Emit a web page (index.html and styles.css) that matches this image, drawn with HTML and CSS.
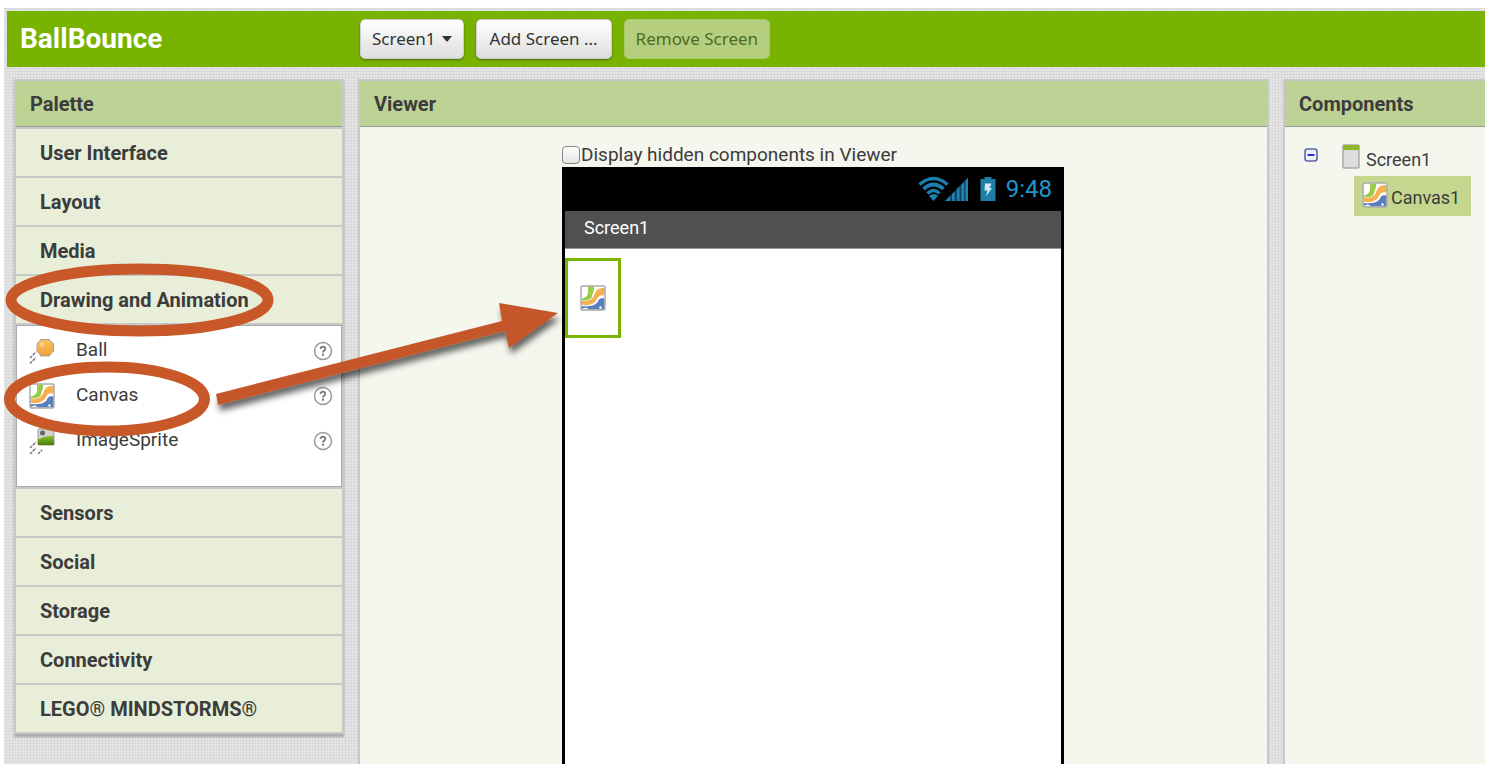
FILE: index.html
```html
<!DOCTYPE html>
<html lang="en">
<head>
<meta charset="utf-8">
<title>BallBounce</title>
<link rel="stylesheet" href="styles.css">
</head>
<body>
<svg class="defs" aria-hidden="true">
  <defs>
    <linearGradient id="orange" x1="0" y1="0" x2="0" y2="1"><stop offset="0" stop-color="#fbc35c"/><stop offset="1" stop-color="#eea139"/></linearGradient>
    <linearGradient id="hill" x1="0" y1="0" x2="0" y2="1"><stop offset="0" stop-color="#8cc42c"/><stop offset="1" stop-color="#4a7d0a"/></linearGradient>
    <symbol id="i-canvas" viewBox="0 0 26 26">
      <rect x="1" y="1" width="24" height="24" rx="1.5" fill="#fff"/>
      <path d="M8 1.500H14C14.500 6 12.500 8 12 11.500C11 15 6.500 15.500 2 15.500V13.500C6 12.500 8.500 10 8 6Z" fill="#9ccb4b"/>
      <path d="M24.500 3C17.500 2.500 15.500 6 14 10.500C12.500 15 7.500 16 1.500 16V19.500C9 21.500 15 18.500 17 14C18.500 10.500 20.500 10 24.500 10.500Z" fill="#f6b04f"/>
      <path d="M24.500 13.500C20 12.500 18.500 14.500 17.500 17.500C14 21.500 8 21.500 1.500 21V24.500H24.500Z" fill="#587fbd"/>
      <circle cx="20.500" cy="22.500" r="1.200" fill="#fff"/><path d="M2.500 23.500L6 22.500L9.500 24.500H2.500Z" fill="#fff"/>
      <rect x="1" y="1" width="24" height="24" rx="1.500" fill="none" stroke="#aaa" stroke-width="1.500"/>
    </symbol>
    <symbol id="i-help" viewBox="0 0 20 20">
      <circle cx="10" cy="10" r="8.500" fill="#fff" stroke="#999" stroke-width="1.500"/>
      <path d="M7.500 8C7.500 4.800 12.500 5 12.300 7.900C12.200 9.500 10 9.500 10 11.500" fill="none" stroke="#777" stroke-width="1.800"/><rect x="9" y="12.700" width="2" height="2" fill="#777"/>
    </symbol>
  </defs>
</svg>
<div class="app">
  <header class="topbar">
    <h1 class="project">BallBounce</h1>
    <div class="actions">
      <button class="btn" type="button">Screen1 <svg class="caret" viewBox="0 0 10 6"><path d="M0 0H10L5.500 5.500H4.500Z" fill="#333"/></svg></button>
      <button class="btn btn-add" type="button">Add Screen ...</button>
      <button class="btn" type="button" disabled>Remove Screen</button>
    </div>
  </header>
  <main class="columns">
    <div class="side">
      <section class="panel palette">
        <h2 class="panel-title">Palette</h2>
        <button class="category" type="button">User Interface</button>
        <button class="category" type="button">Layout</button>
        <button class="category" type="button">Media</button>
        <button class="category" type="button">Drawing and Animation</button>
        <ul class="items">
          <li class="item">
            <svg class="item-icon" viewBox="0 0 26 26"><path d="M1 20L7 14M1 25.500L7 19.500" stroke="#666" stroke-width="1.300" stroke-dasharray="3 1"/><path d="M12 1H20L25 6V13L20 18.500H12L7.500 13V6Z" fill="#999"/><circle cx="16.200" cy="9.800" r="8.300" fill="url(#orange)"/><circle cx="13" cy="6.500" r="2.200" fill="#fff" opacity=".35"/></svg>
            <span class="item-name">Ball</span>
            <button class="help" type="button" aria-label="About Ball"><svg viewBox="0 0 20 20"><use href="#i-help"/></svg></button>
          </li>
          <li class="item">
            <svg class="item-icon" viewBox="0 0 26 26"><use href="#i-canvas"/></svg>
            <span class="item-name">Canvas</span>
            <button class="help" type="button" aria-label="About Canvas"><svg viewBox="0 0 20 20"><use href="#i-help"/></svg></button>
          </li>
          <li class="item">
            <svg class="item-icon" viewBox="0 0 26 26"><path d="M1 20L7 14M1 26L7 20M9 26L13 22" stroke="#666" stroke-width="1.300" stroke-dasharray="3 1"/><rect x="9" y="1" width="16" height="16" rx="1" fill="#d0d4d0" stroke="#999"/><circle cx="13.500" cy="5" r="2.500" fill="#666"/><path d="M9 11C13 11 16 7 25 8V17H9Z" fill="url(#hill)"/></svg>
            <span class="item-name">ImageSprite</span>
            <button class="help" type="button" aria-label="About ImageSprite"><svg viewBox="0 0 20 20"><use href="#i-help"/></svg></button>
          </li>
        </ul>
        <button class="category" type="button">Sensors</button>
        <button class="category" type="button">Social</button>
        <button class="category" type="button">Storage</button>
        <button class="category" type="button">Connectivity</button>
        <button class="category" type="button">LEGO® MINDSTORMS®</button>
      </section>
    </div>
    <section class="panel viewer">
      <h2 class="panel-title">Viewer</h2>
      <div class="stage">
        <label class="toggle"><input class="check" type="checkbox">Display hidden components in Viewer</label>
        <div class="phone">
          <div class="status">
            <svg class="radio-icon" viewBox="0 0 52 26">
              <g fill="none" stroke="#1c7fae" stroke-width="3.600"><path d="M1.500 8.500Q15.500 -3.500 29.500 8.500"/><path d="M5.500 13Q15.500 4 25.500 13"/><path d="M9.500 17.500Q15.500 11.500 21.500 17.500"/></g>
              <path d="M11 20Q15.500 16 20 20L15.500 25Z" fill="#1c7fae"/>
              <path d="M27 25L50 1.500V25Z" fill="#0d4664"/><path d="M27 25L32 20V25ZM34 25V18L36.500 15.500V25ZM39 25V13L41.500 10.500V25ZM43.500 25V8.500L46 6V25ZM47.500 25V4.500L50 2V25Z" fill="#1c85b5"/>
            </svg>
            <svg class="battery" viewBox="0 0 16 26"><path d="M4.500 1H11.500V3H15.500V25H.500V3H4.500Z" fill="#1f7ea8"/><path d="M5 7.500H11.500L9.500 12H12L6 20.500L7.500 14.500H4.500Z" fill="#d5e8f0"/></svg>
            <span>9:48</span>
          </div>
          <div class="screen-title">Screen1</div>
          <div class="screen">
            <div class="drop"><svg class="item-icon" viewBox="0 0 26 26"><use href="#i-canvas"/></svg></div>
          </div>
        </div>
      </div>
    </section>
    <section class="panel components">
      <h2 class="panel-title">Components</h2>
      <div class="tree">
        <div class="node">
          <button class="collapse" type="button" aria-label="Collapse Screen1"><svg viewBox="0 0 14 14"><rect x="1" y="1" width="12" height="12" rx="2.500" fill="#eef0f8" stroke="#5a68b0" stroke-width="1.600"/><path d="M3.500 7H10.500" stroke="#0000c8" stroke-width="1.600"/></svg></button>
          <svg class="form-icon" viewBox="0 0 18 25"><rect x="1" y="1" width="16" height="23" rx="1" fill="#ddd" stroke="#aaa" stroke-width="1.500"/><path d="M1 1H17V6H1Z" fill="#8fb82c"/></svg>
          <span class="node-name">Screen1</span>
        </div>
        <div class="node selected"><svg class="item-icon" viewBox="0 0 26 26"><use href="#i-canvas"/></svg><span class="node-name">Canvas1</span></div>
      </div>
    </section>
  </main>
  <svg class="notes" viewBox="0 0 600 460" aria-hidden="true">
    <defs><filter id="shade" x="-10%" y="-20%" width="120%" height="160%"><feDropShadow dx="2" dy="6" stdDeviation="3" flood-color="#000" flood-opacity=".6"/></filter></defs>
    <g fill="none" stroke="#c95828" stroke-width="11"><ellipse cx="139.500" cy="300" rx="128.500" ry="31"/><ellipse cx="107" cy="399" rx="97.500" ry="32"/></g>
    <path d="M216 394L502 321L499 303L558 313L509 348L505 331L218 405Z" fill="#c55629" filter="url(#shade)"/>
  </svg>
</div>
</body>
</html>
```
FILE: styles.css
```css
* { box-sizing: border-box; }
body {
  margin: 0;
  height: 100vh;
  padding: 8px 9px 8px 4px;
  background: #fff;
  color: #3c3c3c;
  font: 19px/24px Roboto, "Liberation Sans", sans-serif;
}
button { font: inherit; color: inherit; }
svg { display: block; }
.defs { position: absolute; width: 0; height: 0; }
.app {
  display: flex;
  flex-direction: column;
  height: 100%;
  overflow: hidden;
  padding: 3px 0 0 3px;
  background:
    repeating-linear-gradient(0deg, transparent 0 2px, rgba(150, 150, 150, .12) 2px 3px),
    repeating-linear-gradient(90deg, transparent 0 2px, rgba(150, 150, 150, .12) 2px 3px),
    #e5e5e5;
}
.topbar {
  display: flex;
  align-items: center;
  flex: none;
  height: 56px;
  padding-left: 13px;
  background: #77b300;
}
.project { margin: 0; width: 340px; font-size: 28px; line-height: 32px; color: #fff; }
.actions { display: flex; gap: 12px; }
.btn {
  display: flex;
  align-items: center;
  justify-content: center;
  gap: 6px;
  height: 40px;
  padding: 0 11px;
  border: 1px solid #d0d0d0;
  border-radius: 5px;
  background: linear-gradient(#fff, #dedede);
  box-shadow: 0 1px 2px rgba(0, 0, 0, .4);
  color: #333;
  font: 17px/24px "Noto Sans", "Open Sans", sans-serif;
}
.btn-add { min-width: 136px; }
.btn:disabled { border-color: #a6c964; background: #b5cf7e; box-shadow: none; color: #4e6b20; }
.caret { width: 10px; height: 6px; }
.columns { display: flex; flex: 1; gap: 14px; min-height: 0; margin-top: 12px; padding-left: 7px; }
.side { flex: none; width: 330px; }
.panel { border: 2px solid #c8c8c8; border-bottom: 0; background: #f5f6ee; }
.panel-title {
  margin: 0;
  padding: 11px 14px 10px;
  border-bottom: 1px solid #999b94;
  background: #bdd396;
  font-size: 20px;
  line-height: 24px;
}
.palette { display: flex; flex-direction: column; border-bottom: 1px solid #aaa; box-shadow: 0 2px 2px rgba(0, 0, 0, .25); background: #c8c8c8; }
.palette .panel-title { margin-bottom: 2px; }
.category {
  height: 49px;
  padding: 0 24px;
  border: 0;
  border-bottom: 2px solid #c8c8c8;
  background: #e8eed7;
  font-size: 20px;
  font-weight: 700;
  text-align: left;
}
.items {
  margin: 0 0 2px;
  padding: 2px 8px 23px 12px;
  border: 1px solid #aaa;
  background: #fff;
  list-style: none;
}
.item { display: flex; align-items: center; height: 45px; }
.item-icon { width: 26px; height: 26px; }
.item-name { flex: 1; padding: 0 0 2px 21px; }
.help { padding: 0; border: 0; background: none; }
.help svg { width: 20px; height: 20px; }
.viewer { flex: 1; min-width: 0; }
.viewer, .components { display: flex; flex-direction: column; }
.stage { display: flex; flex: 1; flex-direction: column; width: 502px; min-height: 0; margin-left: 202px; padding-top: 16px; }
.toggle { display: flex; align-items: center; }
.check {
  appearance: none;
  width: 18px;
  height: 18px;
  margin: 0 1px 0 0;
  border: 1px solid #888;
  border-radius: 4px;
  background: linear-gradient(#fff, #e4e4e4);
}
.phone { display: flex; flex: 1; flex-direction: column; padding: 0 3px; background: #000; }
.status {
  display: flex;
  align-items: center;
  justify-content: flex-end;
  height: 44px;
  padding-right: 9px;
  color: #1f97ce;
  font-size: 24px;
}
.radio-icon { width: 52px; height: 26px; margin-right: 10px; }
.battery { width: 16px; height: 26px; margin-right: 10px; }
.screen-title { height: 38px; padding: 5px 19px; border-bottom: 1px solid #999; background: #505050; color: #fff; font-size: 18px; }
.screen { flex: 1; padding-top: 9px; background: #fff; }
.drop { width: 56px; padding: 24px 12px; border: 3px solid #77b300; }
.components { flex: none; width: 202px; border-right: 0; }
.tree { padding: 14px 14px 0 19px; }
.node { display: flex; align-items: center; }
.collapse { padding: 0; margin: 0 24px 4px 0; border: 0; background: none; }
.collapse svg { width: 14px; height: 14px; }
.form-icon { width: 18px; height: 25px; }
.node-name { padding: 7px 0 0 6px; font-size: 18px; }
.selected { height: 40px; margin: 4px 0 0 50px; padding: 0 8px 3px; background: #c5d78f; }
.selected .node-name { padding-left: 3px; }
.notes { position: absolute; left: 0; top: 0; width: 600px; height: 460px; pointer-events: none; }
```
